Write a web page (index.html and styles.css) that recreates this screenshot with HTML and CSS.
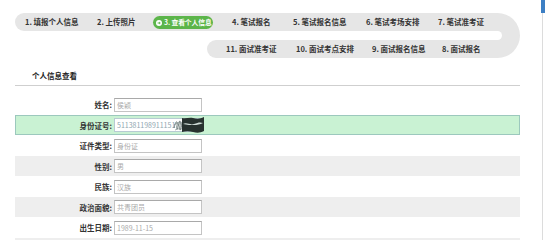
FILE: index.html
```html
<!DOCTYPE html>
<html lang="zh-CN">
<head>
<meta charset="utf-8">
<title>个人信息查看</title>
<link rel="stylesheet" href="styles.css">
</head>
<body>
<div class="page">
  <div class="main">
    <div class="track">
      <div class="rows">
        <div class="row1">
          <span class="step">1. 填报个人信息</span>
          <span class="step">2. 上传照片</span>
          <span class="step"><span class="pill"><span class="dot"><svg viewBox="0 0 6 6" width="6" height="6"><circle cx="3" cy="3" r="3" fill="#fff"/><path d="M1.6 2.4h1.6V1.5L4.7 3 3.2 4.5V3.6H1.6z" fill="#5cb54a"/></svg></span>3. 查看个人信息</span></span>
          <span class="step">4. 笔试报名</span>
          <span class="step">5. 笔试报名信息</span>
          <span class="step">6. 笔试考场安排</span>
          <span class="step">7. 笔试准考证</span>
        </div>
        <div class="row2">
          <span class="step">11. 面试准考证</span>
          <span class="step">10. 面试考点安排</span>
          <span class="step">9. 面试报名信息</span>
          <span class="step">8. 面试报名</span>
        </div>
      </div>
      <div class="turn"></div>
    </div>

    <div class="section-title">个人信息查看</div>

    <div class="form">
      <div class="frow odd"><span class="label">姓名:</span><span class="input">侯颖</span></div>
      <div class="frow active"><span class="label">身份证号:</span><span class="input idnum">511381198911151<svg class="redact" viewBox="0 0 32 16" width="32" height="16"><path d="M1 11c1-4 2-7 3-6s-1 6 0 7 2-9 3-8-1 8 0 9 2-10 3-9" fill="none" stroke="#5f6f6c" stroke-width="0.9"/><path d="M1 8c3-2 5-3 8-2M2 13c3-1 5-2 7-1" fill="none" stroke="#7a8a88" stroke-width="0.7"/><path d="M9 1c4 1 7-1 11 0s7 1 11-1v14c-4 2-7 2-11 1s-7-1-11 0z" fill="#27322f"/><path d="M10 7c4-2 7 1.5 11 0s6-2 9-1c-3 1.5-6 2-9 2s-7 0-11-1z" fill="#cfdcd7"/></svg></span></div>
      <div class="frow odd"><span class="label">证件类型:</span><span class="input">身份证</span></div>
      <div class="frow even"><span class="label">性别:</span><span class="input">男</span></div>
      <div class="frow odd"><span class="label">民族:</span><span class="input">汉族</span></div>
      <div class="frow even"><span class="label">政治面貌:</span><span class="input">共青团员</span></div>
      <div class="frow odd"><span class="label">出生日期:</span><span class="input">1989-11-15</span></div>
      <div class="frow even"></div>
    </div>
  </div>
  <div class="side"><div class="side-top"></div></div>
</div>
</body>
</html>
```
FILE: styles.css
```css
html, body {
  margin: 0;
  padding: 0;
  background: #fff;
}
body {
  font-family: "Noto Sans CJK SC", "Noto Sans", sans-serif;
  color: #333;
  overflow: hidden;
  width: 545px;
  height: 240px;
}
.page {
  display: flex;
  height: 240px;
  overflow: hidden;
}
.main {
  width: 541px;
}
.side {
  width: 4px;
  display: flex;
  flex-direction: column;
}
.side-top {
  height: 13px;
  background: #3d7fc4;
}
.side::after {
  content: "";
  flex: 1;
  width: 1px;
  margin-left: 1px;
  background: #dcdcdc;
}

/* step track */
.track {
  display: flex;
  margin: 13px 0 0 15px;
  width: 505px;
}
.rows {
  flex: 1;
  display: flex;
  flex-direction: column;
  gap: 9px;
}
.row1, .row2 {
  height: 18px;
  background: #e6e6e6;
  display: grid;
  align-items: center;
  font-size: 7.5px;
  font-weight: 700;
  color: #333;
  white-space: nowrap;
}
.row1 {
  border-radius: 9px 0 0 9px;
  padding-left: 10px;
  grid-template-columns: 72px 56px 79px 61px 73px 72px auto;
}
.row2 {
  margin-left: 192px;
  border-radius: 9px 0 0 9px;
  padding-left: 19px;
  grid-template-columns: 70px 76px 70px auto;
}
.step {
  line-height: 18px;
}
.pill {
  display: inline-flex;
  align-items: center;
  gap: 2px;
  height: 13px;
  width: 60px;
  box-sizing: border-box;
  padding-left: 3px;
  background: #5cb54a;
  color: #fff;
  border-radius: 7px;
  font-size: 6.8px;
  line-height: 13px;
  letter-spacing: -0.1px;
  vertical-align: middle;
  overflow: hidden;
}
.dot {
  display: flex;
}
.turn {
  width: 23px;
  height: 45px;
  box-sizing: border-box;
  border: 18px solid #e6e6e6;
  border-left: none;
  border-radius: 0 22.5px 22.5px 0;
}

/* section */
.section-title {
  margin: 11px 21px 0 15px;
  padding: 0 0 3px 17px;
  line-height: 13px;
  font-size: 7.5px;
  font-weight: 700;
  color: #222;
  border-bottom: 1px solid #cfcfcf;
}

.form {
  margin: 8px 21px 0 15px;
}
.frow {
  display: flex;
  align-items: center;
  box-sizing: border-box;
}
.frow.odd {
  height: 21px;
  background: #fff;
}
.frow.even {
  height: 20px;
  background: #eeeeee;
}
.frow.active {
  height: 20px;
  background: #c9f2d3;
  border: 1px solid #9cc8bd;
}
.label {
  width: 99px;
  text-align: right;
  font-size: 7.5px;
  font-weight: 700;
  color: #333;
  padding-right: 2px;
  box-sizing: border-box;
}
.active .label {
  width: 98px;
}
.input {
  position: relative;
  width: 88px;
  height: 14px;
  box-sizing: border-box;
  border: 1px solid #c4c4c4;
  border-top-color: #a9a9a9;
  background: #fff;
  font-size: 7px;
  line-height: 12px;
  padding-left: 2px;
  color: #aaa;
  white-space: nowrap;
}
.idnum {
  color: #8fa6b0;
  border-color: #b7cbd2;
}
.redact {
  position: absolute;
  left: 58px;
  top: -2px;
}
```
